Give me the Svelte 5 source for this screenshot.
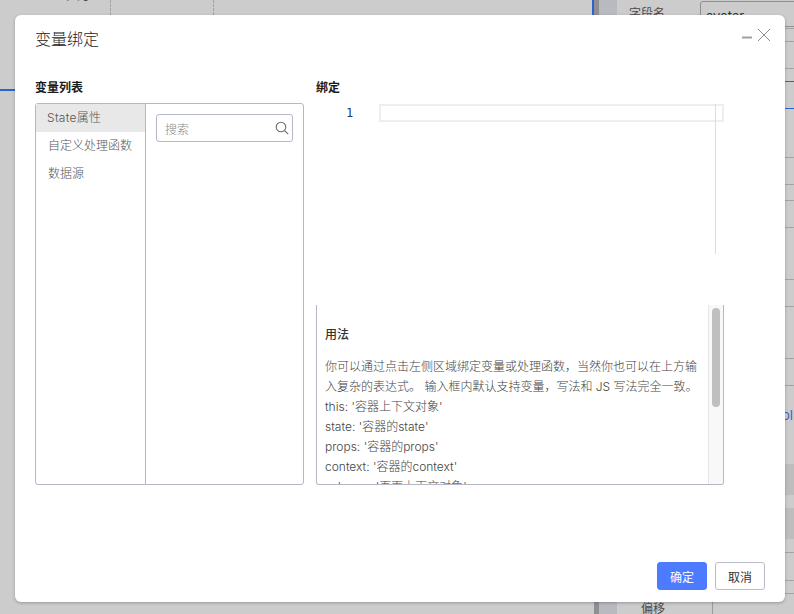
<script>
  const vars = ['State属性', '自定义处理函数', '数据源'];
  const usage = [
    "this: '容器上下文对象'",
    "state: '容器的state'",
    "props: '容器的props'",
    "context: '容器的context'",
    "schema: '页面上下文对象'"
  ];
  const rules = [28, 41, 68, 157, 184, 200, 227, 279, 306, 358, 385, 552, 580, 593];
</script>

<div class="page">
  <!-- dimmed designer behind the dialog -->
  <div class="backdrop" aria-hidden="true">
    <span class="bg-text top">大小</span>
    <span class="guide g1"></span>
    <span class="guide g2"></span>
    <span class="blue-left"></span>
    <span class="blue-top"></span>
    <span class="side-dark"></span>
    <span class="side-strip"></span>
    <span class="bg-text field">字段名</span>
    <span class="bg-input">avatar</span>
    <span class="bg-text offset">偏移</span>
    <span class="bottom-line"></span>
    <span class="bg-link">ol</span>
    {#each rules as y}
      <span class="rule" style="top: {y}px"></span>
    {/each}
    <span class="rule blue" style="top: 81px"></span>
    <span class="rule blue" style="top: 108px"></span>
    <span class="cell" style="top: 464px; height: 31px"></span>
    <span class="cell" style="top: 508px; height: 31px"></span>
  </div>

  <div class="modal">
    <header class="modal-head">
      <h2>变量绑定</h2>
      <div class="actions">
        <svg width="12" height="14" viewBox="0 0 12 14"><path d="M2 9.5h10" stroke="#a0a0a0" stroke-width="2" /></svg>
        <svg width="14" height="14" viewBox="0 0 14 14"><path d="M1 1l12 12M13 1L1 13" stroke="#8f8f8f" stroke-width="1" fill="none" /></svg>
      </div>
    </header>

    <div class="modal-body">
      <section class="col-left">
        <h3>变量列表</h3>
        <div class="var-panel">
          <ul class="var-list">
            {#each vars as v, i}
              <li class:active={i === 0}>{v}</li>
            {/each}
          </ul>
          <div class="var-search">
            <div class="search">
              <span>搜索</span>
              <svg width="14" height="14" viewBox="0 0 14 14" fill="none" stroke="#6b6b6b" stroke-width="1.1">
                <circle cx="6" cy="6" r="4.8" /><path d="M9.6 9.6l3.6 3.6" />
              </svg>
            </div>
          </div>
        </div>
      </section>

      <section class="col-right">
        <h3>绑定</h3>
        <div class="editor">
          <span class="line-no">1</span>
          <div class="current-line"></div>
          <span class="ruler"></span>
        </div>
        <div class="help">
          <div class="help-text">
            <h4>用法</h4>
            <p>你可以通过点击左侧区域绑定变量或处理函数，当然你也可以在上方输入复杂的表达式。 输入框内默认支持变量，写法和 JS 写法完全一致。</p>
            {#each usage as line}
              <div>{line}</div>
            {/each}
          </div>
          <div class="scroll"><span class="thumb"></span></div>
        </div>
      </section>
    </div>

    <footer class="modal-foot">
      <button class="primary">确定</button>
      <button>取消</button>
    </footer>
  </div>
</div>

<style>
  :global(body) {
    margin: 0;
    overflow: hidden;
  }

  .page {
    position: relative;
    width: 794px;
    height: 614px;
    overflow: hidden;
    background: #cccccc;
    font-family: Inter, "Noto Sans CJK SC", sans-serif;
    font-weight: 300;
  }

  .backdrop span {
    position: absolute;
  }

  .bg-text {
    font-size: 14px;
    font-weight: 400;
    color: #4a4a4a;
  }

  .top { left: 66px; top: -17px; }
  .field { left: 629px; top: 4px; font-size: 12px; }
  .offset { left: 641px; top: 599px; font-size: 12px; }

  .guide {
    top: 0;
    height: 15px;
    border-left: 1px dashed #a3a3a3;
  }

  .g1 { left: 110px; }
  .g2 { left: 213px; }

  .blue-left {
    left: 0;
    top: 89px;
    width: 15px;
    height: 2px;
    background: #2a62d0;
  }

  .blue-top {
    left: 592px;
    top: 0;
    width: 2px;
    height: 15px;
    background: #2a62d0;
  }

  .side-dark {
    left: 594px;
    top: 0;
    width: 5px;
    height: 614px;
    background: #8f8f8f;
  }

  .side-strip {
    left: 599px;
    top: 0;
    width: 18px;
    height: 614px;
    background: #b9bac0;
  }

  .bottom-line {
    left: 712px;
    top: 600px;
    width: 1px;
    height: 14px;
    background: #9a9a9a;
  }

  .bg-input {
    left: 700px;
    top: 1px;
    width: 94px;
    height: 24px;
    padding-left: 5px;
    border: 1px solid #8f8f8f;
    border-radius: 3px;
    font-size: 13px;
    font-weight: 400;
    line-height: 28px;
    color: #333;
  }

  .bg-link {
    left: 782px;
    top: 407px;
    font-size: 13px;
    font-weight: 400;
    color: #3a62c4;
  }

  .rule {
    left: 785px;
    width: 9px;
    height: 1px;
    background: #a4a4a4;
  }

  .rule.blue {
    background: #2a62d0;
  }

  .cell {
    left: 785px;
    width: 9px;
    background: #bdbdbd;
  }

  .modal {
    position: absolute;
    left: 15px;
    top: 15px;
    width: 770px;
    height: 587px;
    display: flex;
    flex-direction: column;
    background: #fff;
    border-radius: 6px;
    box-shadow: 0 1px 3px rgba(80, 80, 100, 0.45);
  }

  .modal-head {
    display: flex;
    justify-content: space-between;
    padding: 12px 14px 0 20px;
    height: 50px;
    box-sizing: border-box;
  }

  h2 {
    margin: 0;
    font-size: 16px;
    line-height: 24px;
    font-weight: 300;
    color: #222;
  }

  .actions {
    display: flex;
    gap: 5px;
    align-items: flex-start;
    padding-top: 1px;
  }

  .modal-body {
    flex: 1;
    display: flex;
    gap: 12px;
    padding: 14px 61px 0 20px;
  }

  h3 {
    margin: 0 0 7px;
    font-size: 12px;
    line-height: 17px;
    font-weight: 700;
    color: #1a1a1a;
  }

  .col-left {
    width: 269px;
    flex: none;
  }

  .col-right {
    flex: 1;
  }

  .col-right h3 {
    margin-bottom: 8px;
  }

  .var-panel {
    display: flex;
    height: 382px;
    box-sizing: border-box;
    border: 1px solid #b4b8c6;
    border-radius: 3px;
  }

  .var-list {
    width: 109px;
    margin: 0;
    padding: 0;
    list-style: none;
    border-right: 1px solid #b4b8c6;
    box-sizing: content-box;
  }

  .var-list li {
    height: 28px;
    line-height: 28px;
    padding-left: 12px;
    font-size: 12px;
    color: #555;
  }

  .var-list li.active {
    background: #e8e8e8;
    padding-left: 11px;
    letter-spacing: 0.3px;
  }

  .var-search {
    flex: 1;
    padding: 10px;
  }

  .search {
    display: flex;
    align-items: center;
    justify-content: space-between;
    height: 28px;
    box-sizing: border-box;
    padding: 0 3px 0 8px;
    border: 1px solid #b4b8c6;
    border-radius: 3px;
    font-size: 12px;
    color: #888;
  }

  .editor {
    position: relative;
    height: 201px;
    font-family: "DejaVu Sans Mono", monospace;
  }

  .line-no {
    position: absolute;
    left: 30px;
    top: 1px;
    font-size: 12px;
    line-height: 16px;
    font-weight: 400;
    color: #1f3a7a;
  }

  .current-line {
    position: absolute;
    left: 63px;
    top: 0;
    width: 345px;
    height: 18px;
    box-sizing: border-box;
    border: 2px solid #eeeeee;
  }

  .ruler {
    position: absolute;
    left: 399px;
    top: 0;
    width: 1px;
    height: 150px;
    background: #dddddd;
  }

  .help {
    display: flex;
    height: 180px;
    box-sizing: border-box;
    border: 1px solid #b4b8c6;
    border-top: none;
    border-radius: 0 0 3px 3px;
    overflow: hidden;
  }

  .help-text {
    flex: 1;
    padding: 21px 8px 0;
    font-size: 12px;
    line-height: 20px;
    color: #444;
    overflow: hidden;
  }

  h4 {
    margin: 0 0 14px;
    font-size: 12px;
    line-height: 17px;
    font-weight: 500;
    color: #333;
  }

  p {
    margin: 0;
  }

  .scroll {
    width: 15px;
    flex: none;
    background: #f8f8f8;
    border-left: 1px solid #e6e6e6;
    padding: 3px 3px 0;
    box-sizing: border-box;
  }

  .thumb {
    display: block;
    width: 8px;
    height: 99px;
    border-radius: 4px;
    background: #bfbfbf;
  }

  .modal-foot {
    display: flex;
    justify-content: flex-end;
    gap: 8px;
    padding: 0 20px 12px;
  }

  button {
    width: 50px;
    height: 28px;
    padding: 0;
    background: #fff;
    border: 1px solid #b9bcc8;
    border-radius: 3px;
    font: inherit;
    font-size: 12px;
    font-weight: 400;
    color: #333;
  }

  button.primary {
    background: #4c7bff;
    border-color: #4c7bff;
    color: #fff;
  }
</style>
